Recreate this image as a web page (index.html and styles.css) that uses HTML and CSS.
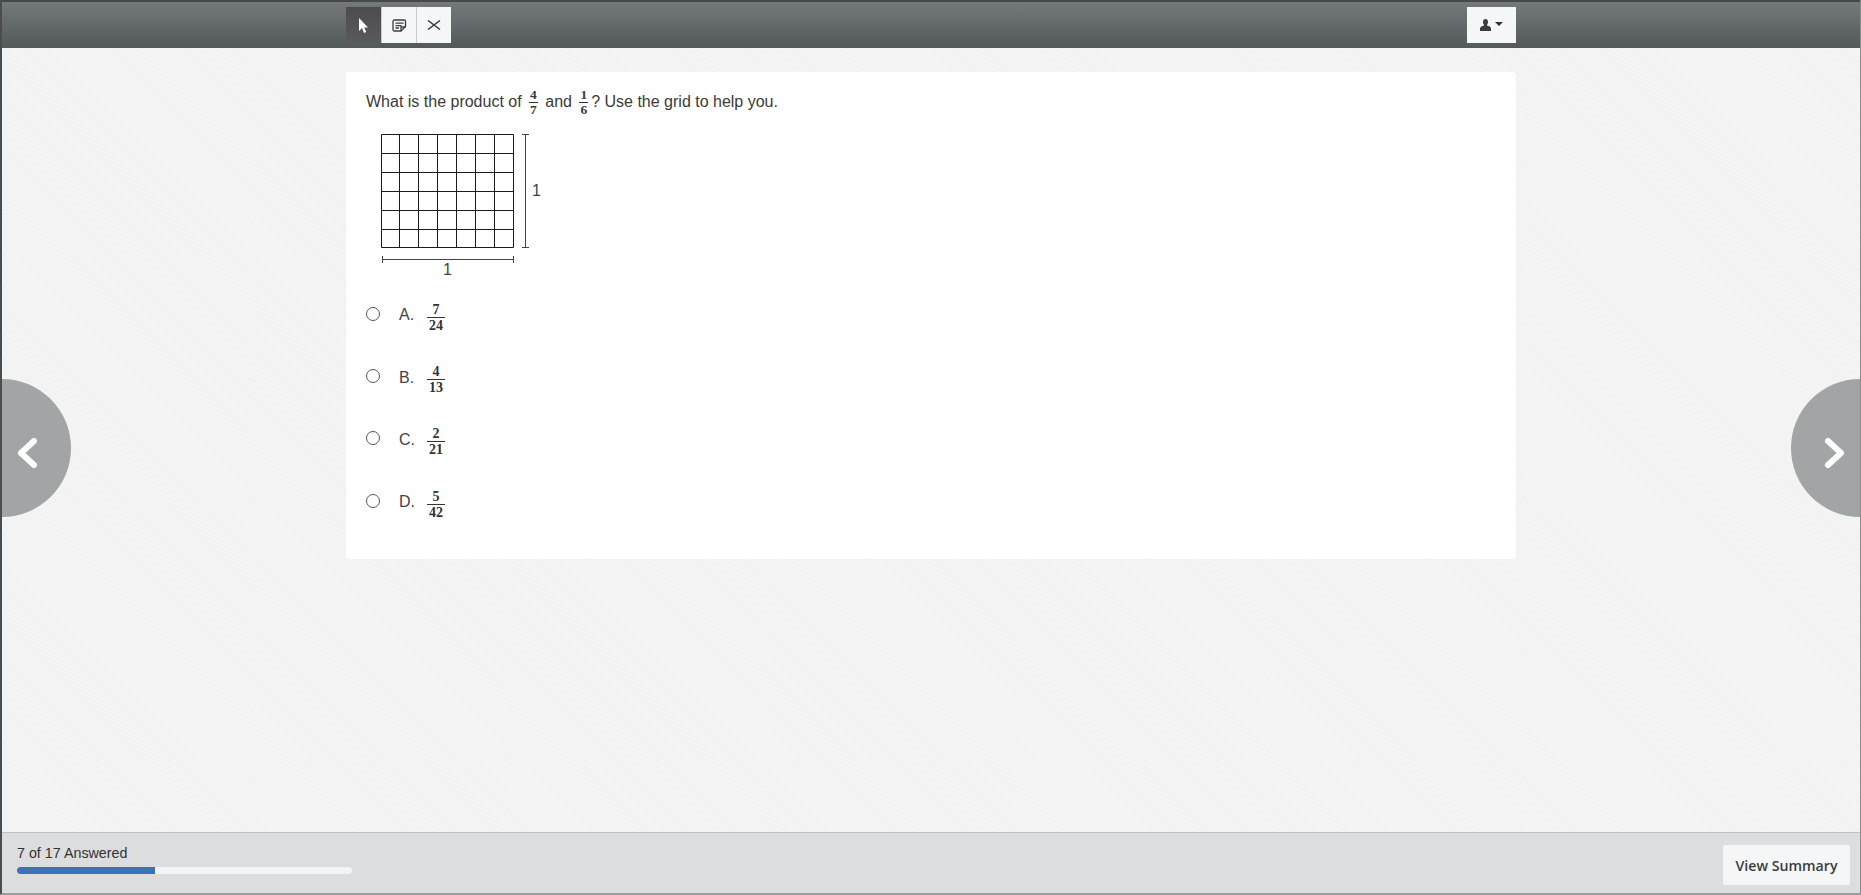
FILE: index.html
```html
<!DOCTYPE html>
<html lang="en">
<head>
    <meta charset="UTF-8">
    <meta name="viewport" content="width=device-width, initial-scale=1.0">
    <title>Assessment</title>
    <link rel="stylesheet" href="styles.css">
</head>
<body>
    <header class="toolbar">
        <div class="toolbar-inner">
            <div class="tool-group">
                <button class="tool tool-active">
                    <svg width="12" height="15" viewBox="0 0 12 15"><path d="M1 0v13l3-3 2 5 2.2-1-2-4.600H10z" fill="#fff"/></svg>
                </button>
                <button class="tool">
                    <svg width="15" height="13" viewBox="0 0 15 13" fill="none" stroke="#3a3d3f" stroke-width="1.300"><path d="M9 12H2.500Q1 12 1 10.500V2.500Q1 1 2.500 1h9.500Q13.500 1 13.500 2.500V7.500z"/><path d="M3.500 4.200h8M3.500 6.700h6M3.500 9h3.500M9 12V8h4.500"/></svg>
                </button>
                <button class="tool">
                    <svg width="14" height="10" viewBox="0 0 14 10" fill="none" stroke="#3a3d3f" stroke-width="1.500"><path d="M1 .5l12 9M13 .5l-12 9"/></svg>
                </button>
            </div>
            <button class="tool user-menu">
                <svg width="11" height="12" viewBox="0 0 11 12"><path d="M5.500 0C3.800 0 3 1.300 3 3c0 1.200.5 2.300 1 2.800v.8C2 7.200 0 8 0 9.500V12h11V9.500C11 8 9 7.200 7 6.600v-.8c.5-.5 1-1.600 1-2.800C8 1.300 7.200 0 5.500 0z" fill="#3a3d3f"/></svg>
                <span class="caret"></span>
            </button>
        </div>
    </header>

    <main class="content">
        <section class="question-card">
            <p class="question-text">What is the product of <span class="frac"><span class="num">4</span><span class="den">7</span></span> and <span class="frac"><span class="num">1</span><span class="den">6</span></span>? Use the grid to help you.</p>

            <svg class="grid-figure" width="160" height="145" viewBox="0 0 160 145">
                <g fill="none" stroke="#1c1c1c" stroke-width="1">
                    <path d="M0.500 .5h132M0.500 19.500h132M0.500 38.500h132M0.500 57.500h132M0.500 76.500h132M0.500 95.500h132M0.500 113.500h132"/>
                    <path d="M.5 .5v113M18.500 .5v113M37.500 .5v113M56.500 .5v113M75.500 .5v113M94.500 .5v113M113.500 .5v113M132.500 .5v113"/>
                    <path d="M144.500 .5v113M141 .5h7M141 113.500h7" stroke="#444"/>
                    <path d="M1.500 125.500h131M1.500 122v7M132.500 122v7" stroke="#444"/>
                </g>
                <text x="151" y="62" class="fig-label">1</text>
                <text x="62" y="141" class="fig-label">1</text>
            </svg>

            <ul class="options">
                <li class="option">
                    <span class="radio"></span><span class="letter">A.</span>
                    <span class="frac frac-option"><span class="num">7</span><span class="den">24</span></span>
                </li>
                <li class="option">
                    <span class="radio"></span><span class="letter">B.</span>
                    <span class="frac frac-option"><span class="num">4</span><span class="den">13</span></span>
                </li>
                <li class="option">
                    <span class="radio"></span><span class="letter">C.</span>
                    <span class="frac frac-option"><span class="num">2</span><span class="den">21</span></span>
                </li>
                <li class="option">
                    <span class="radio"></span><span class="letter">D.</span>
                    <span class="frac frac-option"><span class="num">5</span><span class="den">42</span></span>
                </li>
            </ul>
        </section>
    </main>

    <footer class="status-bar">
        <div class="progress-block">
            <div class="progress-label">7 of 17 Answered</div>
            <div class="progress-track"><div class="progress-fill" style="width: 41.2%"></div></div>
        </div>
        <button class="summary-btn">View Summary</button>
    </footer>

    <!-- side arrows -->
    <button class="side-nav side-prev">
        <svg width="22" height="32" viewBox="0 0 22 32" fill="none" stroke="#fff" stroke-width="6" stroke-linecap="round" stroke-linejoin="round"><path d="M18 4L5 16l13 12"/></svg>
    </button>
    <button class="side-nav side-next">
        <svg width="22" height="32" viewBox="0 0 22 32" fill="none" stroke="#fff" stroke-width="6" stroke-linecap="round" stroke-linejoin="round"><path d="M4 4l13 12L4 28"/></svg>
    </button>
</body>
</html>
```

FILE: styles.css
```css
* {
    box-sizing: border-box;
}

body {
    display: flex;
    flex-direction: column;
    height: 100vh;
    margin: 0;
    overflow: hidden;
    position: relative;
    border-left: 2px solid #4a4d4f;
    border-right: 1px solid #8a8c8e;
    border-bottom: 2px solid #9a9c9e;
    font-family: "Liberation Sans", Arial, sans-serif;
    color: #333;
    background-color: #f4f4f4;
    background-image: repeating-linear-gradient(45deg, rgba(0, 0, 0, 0.012) 0 1px, transparent 1px 3px);
}

button {
    border: none;
    padding: 0;
    cursor: pointer;
}

/* Top bar */
.toolbar {
    height: 48px;
    flex: none;
    background: linear-gradient(#74797c, #54595b);
    border-top: 2px solid #46494b;
    border-bottom: 1px solid #55595b;
}

.toolbar-inner {
    display: flex;
    justify-content: space-between;
    width: 1170px;
    margin-left: 344px;
    padding-top: 5px;
}

.tool-group {
    display: flex;
}

.tool {
    display: flex;
    align-items: center;
    justify-content: center;
    width: 35px;
    height: 36px;
    background-color: #f4f6f8;
    border-left: 1px solid #c9cccd;
}

.tool-active {
    background: linear-gradient(#4c4c4e, #5a5a5c);
    border-left: none;
}

.user-menu {
    gap: 4px;
    width: 49px;
    border-left: none;
}

.caret {
    border-top: 4px solid #333;
    border-left: 4px solid transparent;
    border-right: 4px solid transparent;
    margin-bottom: 3px;
}

/* Question */
.content {
    flex: 1;
    padding: 24px 0 0 344px;
}

.question-card {
    width: 1170px;
    height: 487px;
    padding: 15px 20px;
    background-color: #fff;
    border-radius: 3px;
}

.question-text {
    height: 30px;
    margin: 0;
    font-size: 16px;
    line-height: 30px;
    color: #3a3a3a;
}

.frac {
    display: inline-flex;
    flex-direction: column;
    align-items: center;
    vertical-align: middle;
    margin: 0 3px;
    font-family: "Liberation Serif", "Times New Roman", serif;
    font-weight: bold;
    font-size: 13.500px;
    line-height: 14px;
}

.frac .num {
    padding: 0 1px;
    border-bottom: 1px solid #333;
    align-self: stretch;
    text-align: center;
}

.grid-figure {
    display: block;
    margin: 17px 0 0 15px;
}

.fig-label {
    font-size: 16px;
    fill: #444;
}

.options {
    list-style: none;
    margin: 5px 0 0;
    padding: 0;
}

.option {
    display: flex;
    align-items: center;
    height: 62.400px;
}

.radio {
    width: 14px;
    height: 14px;
    margin: 0 1px 3px 0;
    border: 1px solid #555;
    border-radius: 50%;
    background-color: #fff;
}

.letter {
    width: 28px;
    margin-left: 18px;
    font-size: 16px;
    color: #444;
}

.frac-option {
    width: 18px;
    margin: 4px 0 0;
    font-size: 14px;
    line-height: 15px;
}

/* Bottom bar */
.status-bar {
    display: flex;
    justify-content: space-between;
    height: 61px;
    flex: none;
    padding: 12px 10px 0 15px;
    background-color: #dcddde;
    border-top: 1px solid #bfc0c1;
}

.progress-label {
    font-size: 14.300px;
    line-height: 16px;
    margin-bottom: 6px;
}

.progress-track {
    width: 335px;
    height: 7px;
    background-color: #f2f4f6;
    border-radius: 4px;
    overflow: hidden;
}

.progress-fill {
    height: 100%;
    background-color: #3a72b8;
}

.summary-btn {
    width: 127px;
    height: 40px;
    background-color: #f4f6f8;
    border-radius: 2px;
    font-family: "Open Sans", sans-serif;
    font-size: 14.200px;
    font-weight: 600;
    color: #3a3d40;
}

/* Side arrows */
.side-nav {
    position: absolute;
    top: 379px;
    width: 69px;
    height: 138px;
    display: flex;
    align-items: center;
    background-color: #a2a5a6;
}

.side-nav svg {
    margin-top: 9px;
}

.side-prev {
    left: 0;
    border-radius: 0 69px 69px 0;
    padding-left: 14px;
}

.side-next {
    right: 0;
    border-radius: 69px 0 0 69px;
    padding-left: 33px;
}
```
